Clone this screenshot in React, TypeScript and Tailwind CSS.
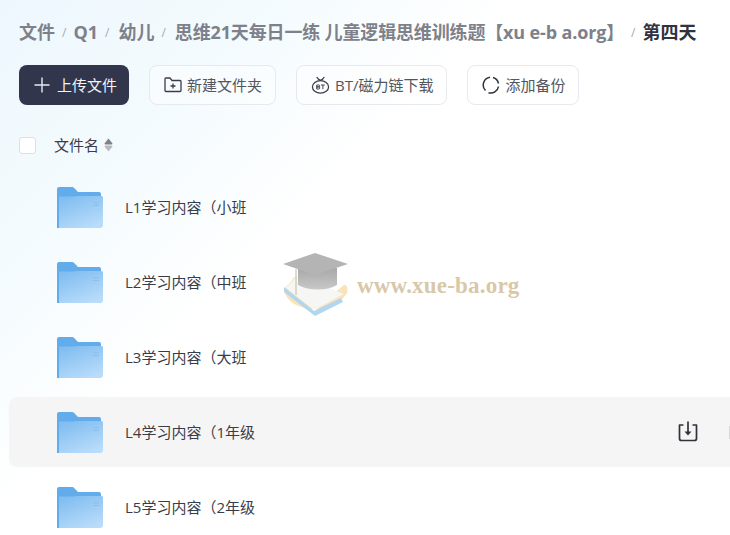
const cjk = "font-['Open_Sans','Noto_Sans_CJK_SC',sans-serif]";

function Folder() {
  return (
    <svg width="46" height="41" viewBox="0 0 46 41" className="shrink-0">
      <defs>
        <linearGradient id="fg" x1="0.2" y1="0" x2="0.7" y2="1">
          <stop offset="0" stopColor="#80bdf0" />
          <stop offset="1" stopColor="#b9dcfa" />
        </linearGradient>
      </defs>
      <path d="M0 2a2 2 0 0 1 2-2h13a3 3 0 0 1 2.400 1.200L21 5h21a2 2 0 0 1 2 2v4H2v30H0z" fill="#62aceb" />
      <path d="M2 41V9.500h15L19 9h25.500a1.500 1.500 0 0 1 1.500 1.500V38a3 3 0 0 1-3 3z" fill="url(#fg)" />
      <path d="M36 16h6M36 18.500h6" stroke="#8fbfe8" strokeWidth="1" />
    </svg>
  );
}

function Row({ name, active }: { name: string; active?: boolean }) {
  return (
    <div className={`relative flex items-center h-[70px] mb-[5px] ml-[9px] pl-[48px] rounded-l-lg ${active ? "bg-[#f5f5f5]" : ""}`}>
      <Folder />
      <span className="ml-[22px] text-[15px] text-[#3a3d48]">{name}</span>
      {active && (
        <div className="ml-auto flex items-center">
          <svg width="24" height="24" viewBox="0 0 24 24" fill="none" stroke="#30323c" strokeWidth="1.700" className="mr-[29px]">
            <path d="M7.500 5H3.500v13.500a2 2 0 0 0 2 2h13a2 2 0 0 0 2-2V5h-4" strokeLinejoin="round" />
            <path d="M12 1.500v12" />
            <path d="M8.500 11.500h7L12 15.500z" fill="#30323c" stroke="none" />
          </svg>
          <div className="w-px h-[13px] bg-[#d8d8d8]" />
        </div>
      )}
    </div>
  );
}

function Sep({ wide }: { wide?: boolean }) {
  return <span className={`ml-[7px] ${wide ? "mr-[9px]" : "mr-[7px]"} text-[12px] font-normal text-[#a6a9b0]`}>/</span>;
}

function Btn({ icon, label }: { icon: React.ReactNode; label: string }) {
  return (
    <div className="h-10 flex items-center pl-[14px] pr-[13px] gap-[5px] rounded-lg border border-[#e6e9ed] bg-white/40 text-[15px] text-[#53565f]">
      {icon}
      <span>{label}</span>
    </div>
  );
}

export default function App() {
  return (
    <div className={`relative w-[730px] h-[535px] overflow-hidden bg-[linear-gradient(135deg,#edf7fd_0%,#f4fbfe_22%,#ffffff_42%)] ${cjk}`}>
      <div className="pl-[19px] pt-[19px] h-[65px] flex items-start">
        <div className="flex items-center h-[27px] text-[18px] font-bold text-[#7e8189] whitespace-nowrap">
          <span>文件</span>
          <Sep />
          <span>Q1</span>
          <Sep wide />
          <span>幼儿</span>
          <Sep wide />
          <span className="tracking-[-0.15px]">思维21天每日一练 儿童逻辑思维训练题【xu e-b a.org】</span>
          <Sep />
          <span className="text-[#30323f]">第四天</span>
        </div>
      </div>

      <div className="pl-[19px] flex gap-5">
        <div className="h-10 w-[110px] flex items-center pl-[15px] gap-[7px] rounded-lg bg-[#31364d] text-[15px] text-[#f2f3f6]">
          <svg width="16" height="16" viewBox="0 0 16 16" stroke="#e8e9ee" strokeWidth="1.400">
            <path d="M8 0.500v15M0.500 8h15" />
          </svg>
          <span>上传文件</span>
        </div>
        <Btn
          label="新建文件夹"
          icon={
            <svg width="18" height="16" viewBox="0 0 18 16" fill="none" stroke="#3a3d48" strokeWidth="1.300">
              <path d="M1 13.500V2a1 1 0 0 1 1-1h4l2 2.500h8a1 1 0 0 1 1 1v9a1 1 0 0 1-1 1H2a1 1 0 0 1-1-1z" strokeLinejoin="round" />
              <path d="M9 6.500v5M6.500 9h5" />
            </svg>
          }
        />
        <Btn
          label="BT/磁力链下载"
          icon={
            <svg width="19" height="20" viewBox="0 0 20 20" fill="none" stroke="#3a3d48" strokeWidth="1.300">
              <ellipse cx="10" cy="12" rx="8.500" ry="6.500" />
              <path d="M6 1.500c1 2 2.500 3 4 3.500 1.500-.5 3-1.500 4-3.500" />
              <path d="M6 10h2.200a1 1 0 0 1 0 2H6zm0 2h2.200a1 1 0 0 1 0 2.200H6zM10.500 10h4M12.500 10v4.500" strokeWidth="1" />
            </svg>
          }
        />
        <Btn
          label="添加备份"
          icon={
            <svg width="18" height="18" viewBox="0 0 18 18" fill="none" stroke="#30323c" strokeWidth="1.500">
              <path d="M3.500 14.500A7.800 7.800 0 0 1 8 1.300" />
              <path d="M11 1.500a7.800 7.800 0 0 1 5.500 6" />
              <path d="M16.500 10.500a7.800 7.800 0 0 1-10 6.200" />
            </svg>
          }
        />
      </div>

      <div className="pl-[19px] mt-[31px] h-[18px] flex items-center">
        <div className="w-[17px] h-[17px] rounded-[3px] border border-[#dcdfe4] bg-white" />
        <span className="ml-[18px] text-[15px] text-[#3a3d48]">文件名</span>
        <svg width="9" height="14" viewBox="0 0 9 14" className="ml-[5px]">
          <path d="M4.500 .5L8.500 5.500Q8.500 6.500 7.500 6.500H1.500Q.5 6.500 .5 5.500z" fill="#7e8189" />
          <path d="M4.500 13.500L8.500 8.500Q8.500 7.500 7.500 7.500H1.500Q.5 7.500 .5 8.500z" fill="#b8bac0" />
        </svg>
      </div>

      <div className="mt-[18px]">
        <Row name="L1学习内容（小班" />
        <Row name="L2学习内容（中班" />
        <Row name="L3学习内容（大班" />
        <Row name="L4学习内容（1年级" active />
        <Row name="L5学习内容（2年级" />
      </div>

      <div className="absolute left-[283px] top-[252px] flex items-center pointer-events-none">
        <svg width="66" height="66" viewBox="0 0 66 66">
          <defs>
            <linearGradient id="capg" x1="0" y1="0" x2="0" y2="1">
              <stop offset="0" stopColor="#a8a8a8" />
              <stop offset="1" stopColor="#c8c8c8" />
            </linearGradient>
          </defs>
          <path d="M1 37c4-4 8-8 10-12l40 16 10-8c3 0 4 2 3 8-6 10-20 16-32 16C14 57 2 48 1 37z" fill="#f9e3b8" />
          <path d="M1 40l31 24 28-14-2-4-27 13L1 35z" fill="#b3d6ef" />
          <path d="M3 36l12-13 46 19-30 16z" fill="#f6f6f4" />
          <path d="M15 16h39v17c-10 6-28 6-39 0z" fill="url(#capg)" />
          <path d="M0 12L32 1l33 11-33 11z" fill="#b4b4b4" />
          <path d="M13 17v26" stroke="#d5cfbd" strokeWidth="1.500" />
        </svg>
        <span className="ml-[8px] mt-[3px] font-['Liberation_Serif',serif] font-bold text-[23px] text-[#d8c8a9] tracking-[0.2px]">www.xue-ba.org</span>
      </div>
    </div>
  );
}
